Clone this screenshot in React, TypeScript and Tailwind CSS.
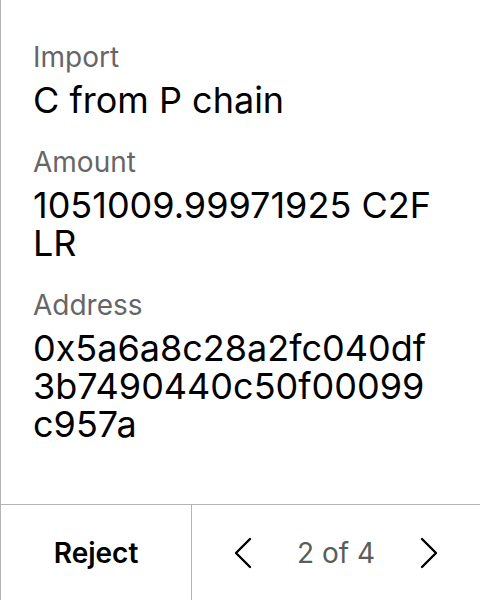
import React from 'react';

const fields = [
  { label: 'Import', value: 'C from P chain' },
  { label: 'Amount', value: '1051009.99971925 C2FLR' },
  { label: 'Address', value: '0x5a6a8c28a2fc040df3b7490440c50f00099c957a' },
];

function Chevron({ dir }: { dir: 'left' | 'right' }) {
  return (
    <svg width="20" height="32" viewBox="0 0 20 32" fill="none" stroke="#000" strokeWidth="2.4" strokeLinecap="round" strokeLinejoin="round">
      {dir === 'left' ? <polyline points="17,2 3,16 17,30" /> : <polyline points="3,2 17,16 3,30" />}
    </svg>
  );
}

export default function App() {
  return (
    <div className="flex h-[600px] w-[480px] flex-col border-l border-[#b3b3b3] bg-white" style={{ fontFamily: 'Inter, "Noto Sans", sans-serif' }}>
      {/* Details */}
      <div className="flex flex-1 flex-col gap-[26px] pl-[32px] pr-[40px] pt-[40px]">
        {fields.map((f) => (
          <div key={f.label} className="flex flex-col gap-[7px]">
            <div className="text-[28px] leading-[34px] text-[#666666]">{f.label}</div>
            <div className="break-all text-[36px] leading-[38px] text-black">{f.value}</div>
          </div>
        ))}
      </div>

      {/* Footer actions */}
      <div className="grid h-24 grid-cols-[191px_1fr] border-t border-[#b3b3b3]">
        <button className="flex items-center justify-center border-r border-[#b3b3b3] text-[28px] font-semibold text-black">
          Reject
        </button>
        <div className="flex items-center justify-center gap-[44px]">
          <Chevron dir="left" />
          <span className="text-[28px] text-[#5c5c5c]">2 of 4</span>
          <Chevron dir="right" />
        </div>
      </div>
    </div>
  );
}
